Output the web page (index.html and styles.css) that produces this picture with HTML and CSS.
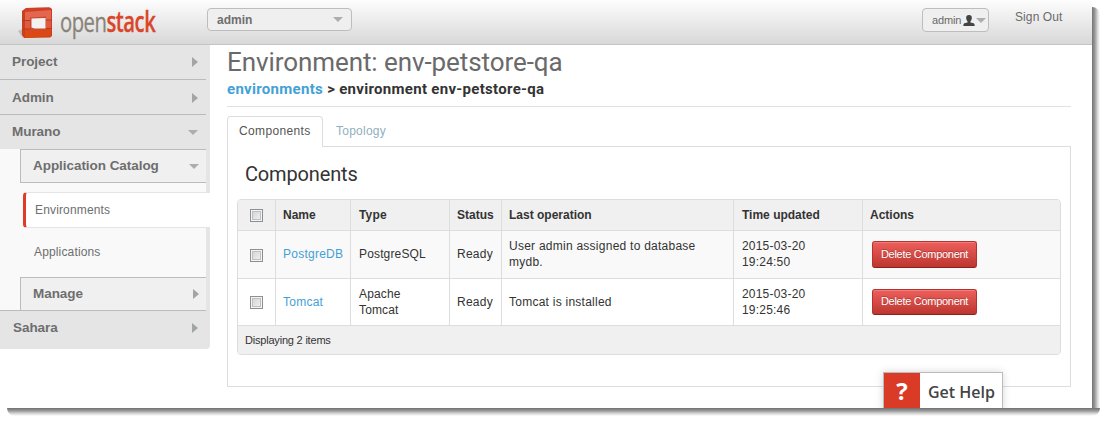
FILE: index.html
```html
<!DOCTYPE html>
<html lang="en">
<head>
<meta charset="utf-8">
<title>Environment: env-petstore-qa</title>
<link rel="stylesheet" href="styles.css">
</head>
<body>
<div class="window">
  <header class="topbar">
    <svg class="mark" width="35" height="32" viewBox="0 0 35 32">
      <path d="M0 24 5 22v9z" fill="#c3bab6"/>
      <path d="M4 4 8 1 32 .5 34 2v27l-2 1.500L6 31l-2-3z" fill="#c9401f"/>
      <path d="M5 4 8.500 1 31 .500 33 3 7 6z" fill="#cf3f29"/>
      <path d="M7 5 33 3v10H7z" fill="#e5664e"/>
      <path d="M7 13h26v9H7z" fill="#e05a3f"/>
      <path d="M7 22h26v7L7 31z" fill="#dc4716"/>
      <path d="M12 10.500 28 9.500V23l-16 .5z" fill="#c94a30"/>
      <path d="M13.500 11.500 27.500 11v10.500h-11l-3-1z" fill="#f4f2f1"/>
      <path d="M4 13.500h8M5 22h7M28 13h6M28 21.500h6" stroke="#b03a25" fill="none"/>
    </svg>
    <div class="brand"><span>open</span><b>stack</b></div>
    <div class="picker">admin<i class="caret down"></i></div>
    <div class="user">admin
      <svg width="12" height="11" viewBox="0 0 12 11"><path d="M6 0C3.600 0 3 1.400 3.200 3.200c.1 1.500.6 2.300 1.300 2.900v1.300L1.300 8.200Q.3 8.700.3 11h11.400q0-2.300-1-2.800L7.500 7.400V6.100c.7-.6 1.200-1.400 1.300-2.900C9 1.400 8.400 0 6 0z" fill="#444"/></svg>
      <i class="caret down"></i>
    </div>
    <a class="signout">Sign Out</a>
  </header>
  <div class="body">
    <nav class="side">
      <div class="item project">Project<i class="caret right"></i></div>
      <div class="item admin">Admin<i class="caret right"></i></div>
      <div class="item murano">Murano<i class="caret down"></i></div>
      <div class="sub">
        <div class="group catalog">Application Catalog<i class="caret down"></i></div>
        <div class="leaf active">Environments</div>
        <div class="leaf">Applications</div>
        <div class="group manage">Manage<i class="caret right"></i></div>
      </div>
      <div class="item sahara">Sahara<i class="caret right"></i></div>
    </nav>
    <main class="main">
      <h1><span>Environment: env-petstore-qa</span></h1>
      <div class="crumbs"><a>environments</a> &gt; environment env-petstore-qa</div>
      <div class="tabs"><div class="tab on">Components</div><div class="tab">Topology</div></div>
      <section class="panel">
        <h2>Components</h2>
        <table class="grid">
          <colgroup><col class="c1"><col class="c2"><col class="c3"><col class="c4"><col class="c5"><col class="c6"><col class="c7"></colgroup>
          <tr class="head"><th><i class="check"></i></th><th>Name</th><th>Type</th><th>Status</th><th>Last operation</th><th>Time updated</th><th>Actions</th></tr>
          <tr class="odd"><td><i class="check"></i></td><td><a>PostgreDB</a></td><td>PostgreSQL</td><td>Ready</td><td>User admin assigned to database<br>mydb.</td><td>2015-03-20<br>19:24:50</td><td><span class="btn">Delete Component</span></td></tr>
          <tr class="even"><td><i class="check"></i></td><td><a>Tomcat</a></td><td>Apache<br>Tomcat</td><td>Ready</td><td>Tomcat is installed</td><td>2015-03-20<br>19:25:46</td><td><span class="btn short">Delete Component</span></td></tr>
          <tr class="foot"><td colspan="7">Displaying 2 items</td></tr>
        </table>
      </section>
    </main>
  </div>
  <div class="help"><span class="q">?</span><span class="label">Get Help</span></div>
</div>
<div class="shade-right"></div>
<div class="shade-bottom"></div>
</body>
</html>
```
FILE: styles.css
```css
* { box-sizing: border-box; }
body {
  margin: 0;
  width: 1107px;
  height: 423px;
  overflow: hidden;
  background: #fff;
  display: grid;
  grid-template: 408px 15px / 1092px 15px;
  font: 12px/16px "Liberation Sans", Arial, sans-serif;
  color: #333;
}
a { color: #43a1d6; }
.window { position: relative; overflow: hidden; }
.shade-right {
  width: 8px;
  height: 401px;
  margin-top: 7px;
  border-radius: 0 8px 0 0;
  background: linear-gradient(90deg, #737373, #9a9a9a 35%, #d8d8d8 70%, #fff);
}
.shade-bottom {
  grid-column: 1 / 3;
  height: 8px;
  margin: 0 7px 0 7px;
  border-radius: 0 0 8px 8px;
  background: linear-gradient(#6d716f, #999 35%, #d8d8d8 70%, #fff);
}

.topbar {
  height: 45px;
  display: flex;
  align-items: flex-start;
  background: linear-gradient(#fdfdfd, #d8d8d8);
  border-bottom: 1px solid #c4c4c4;
}
.mark { margin: 7px 0 0 18px; flex: none; }
.brand {
  width: 147px;
  height: 38px;
  margin: 1px 0 0 7px;
  font: 28px/40px "Open Sans", sans-serif;
  letter-spacing: -.7px;
  color: #8a8379;
  -webkit-text-stroke: .3px;
  white-space: nowrap;
  transform: scaleX(.725);
  transform-origin: 0 0;
}
.brand b { font-weight: 600; color: #db4628; }
.picker {
  width: 145px;
  height: 23px;
  margin: 8px 0 0 0;
  padding: 0 8px 0 9px;
  display: flex;
  align-items: center;
  justify-content: space-between;
  border: 1px solid #bdbdbd;
  border-radius: 4px;
  background: #efefef;
  font-weight: bold;
  color: #6e6e6e;
}
.user {
  width: 67px;
  height: 24px;
  margin: 8px 0 0 570px;
  padding-left: 9px;
  display: flex;
  align-items: center;
  border: 1px solid #bdbdbd;
  border-radius: 4px;
  background: #efefef;
  color: #6a6a6a;
  white-space: nowrap;
  font-size: 11px;
  letter-spacing: -.15px;
}
.user svg { margin-left: 2px; flex: none; }
.user .caret { margin-left: 1px; }
.signout { margin: 9px 0 0 26px; color: #6a6a6a; letter-spacing: .1px; }
.caret { width: 0; height: 0; flex: none; }
.down { border: 5px solid transparent; border-top: 5px solid #aaaeb0; border-bottom: 0; }
.right { border: 5px solid transparent; border-left: 6px solid #a2a5a7; border-right: 0; }

.body { display: flex; align-items: flex-start; }
.side {
  width: 210px;
  height: 304px;
  background: #e5e5e5;
  border-radius: 0 0 4px 0;
  font-weight: bold;
  font-size: 13.5px;
  letter-spacing: -.05px;
  color: #6e6e6e;
}
.item {
  width: 206px;
  height: 35px;
  padding: 0 8px 0 12px;
  display: flex;
  align-items: center;
  justify-content: space-between;
  border-bottom: 1px solid #b9bcbd;
}
.admin { padding-top: 1px; }
.murano { height: 34px; border: 0; }
.sahara { height: 34px; border: 0; padding-left: 13px; }
.sub { width: 206px; height: 162px; background: #f9f9f9; border-bottom: 1px solid #b9bcbd; }
.group {
  width: 186px;
  height: 34px;
  margin-left: 20px;
  padding: 0 7px 0 12px;
  display: flex;
  align-items: center;
  justify-content: space-between;
  border: 1px solid #b9bcbd;
  border-right: 0;
  background: #f0f0f0;
}
.manage { height: 33px; border-bottom: 0; }
.leaf {
  height: 49px;
  padding-left: 34px;
  line-height: 49px;
  font-weight: normal;
  font-size: 12px;
  letter-spacing: .15px;
}
.active {
  width: 187px;
  height: 36px;
  line-height: 34px;
  margin: 9px 0 0 23px;
  padding-left: 9px;
  background: #fff;
  border: 1px solid #e5e5e5;
  border-left: 3px solid #dc3c28;
  border-right: 0;
  border-radius: 4px 0 0 4px;
}

.main { width: 844px; margin-left: 17px; }
h1 {
  height: 33px;
  margin: 0;
  font: 26px/34px Roboto, sans-serif;
  letter-spacing: -.08px;
  color: #6a6a6a;
  white-space: nowrap;
}
.crumbs {
  height: 29px;
  border-bottom: 1px solid #e2e2e2;
  font: bold 15px/22px Roboto, sans-serif;
  letter-spacing: .3px;
  white-space: nowrap;
}
.tabs { display: flex; height: 39px; padding-top: 9px; }
.tab {
  height: 30px;
  padding: 0 13px;
  line-height: 30px;
  letter-spacing: .25px;
  color: #8fb0c0;
}
.tab.on {
  position: relative;
  width: 96px;
  height: 31px;
  padding-left: 11px;
  background: #fff;
  border: 1px solid #ddd;
  border-bottom: 0;
  border-radius: 4px 4px 0 0;
  line-height: 28px;
  letter-spacing: .35px;
  color: #555;
}
.panel { height: 241px; padding: 0 9px; border: 1px solid #ddd; }
h2 {
  height: 52px;
  margin: 0;
  padding-left: 8px;
  font: 20px/54px Roboto, sans-serif;
  letter-spacing: -.15px;
}
.grid {
  width: 824px;
  table-layout: fixed;
  border: 1px solid #ddd;
  border-spacing: 0;
  border-collapse: separate;
  border-radius: 4px;
  overflow: hidden;
}
.c1 { width: 37px; }
.c2 { width: 75px; }
.c3 { width: 99px; }
.c4 { width: 52px; }
.c5 { width: 232px; }
.c6 { width: 129px; }
.c7 { width: 198px; }
th, td { padding: 0 0 0 7px; text-align: left; white-space: nowrap; vertical-align: middle; }
th + th, td + td { border-left: 1px solid #ddd; }
.head { height: 30px; background: #f0f0f0; }
.odd { height: 48px; background: #f9f9f9; }
.even { height: 47px; }
.foot { height: 29px; background: #f0f0f0; font-size: 11px; }
td { border-top: 1px solid #ddd; letter-spacing: .25px; }
.odd td { padding-bottom: 2px; }
.odd td:last-child { padding-bottom: 0; }
.foot td { letter-spacing: -.2px; }
th:first-child, .odd td:first-child, .even td:first-child { padding-left: 12px; }
.odd td:first-child { padding-top: 2px; padding-bottom: 0; }
td:nth-child(7) { padding-left: 9px; }
th:nth-child(3), td:nth-child(3) { padding-left: 8px; letter-spacing: .15px; }
th:nth-child(6), td:nth-child(6) { padding-left: 8px; letter-spacing: .2px; }
th:nth-child(6) { letter-spacing: 0; }
.check {
  display: block;
  width: 13px;
  height: 13px;
  border: 1px solid #8e8f8f;
  background: linear-gradient(135deg, #cbcfd5, #f6f6f6);
  box-shadow: inset 0 0 0 1px #f4f4f4, inset 0 0 0 2px #bcc0c5;
}
.btn {
  display: block;
  width: 105px;
  height: 27px;
  border: 1px solid #b4332e;
  border-bottom-color: #8b211d;
  border-radius: 3px;
  background: linear-gradient(#ee5f5b, #bd362f);
  box-shadow: inset 0 1px 0 rgba(255,255,255,.2);
  color: #fff;
  font-size: 11px;
  line-height: 25px;
  text-align: center;
  letter-spacing: -.28px;
  text-shadow: 0 -1px 0 rgba(0,0,0,.25);
}
.short { height: 26px; line-height: 23px; }

.help {
  position: absolute;
  left: 883px;
  top: 372px;
  width: 120px;
  height: 40px;
  display: flex;
  border: 1px solid #bbb;
  background: #fff;
  box-shadow: 0 0 8px rgba(0,0,0,.16);
  font: 600 16px/39px "Open Sans", sans-serif;
  color: #444;
}
.q { width: 36px; background: #da3b27; color: #fff; font-weight: 700; font-size: 24px; line-height: 36px; text-align: center; }
.label { padding-left: 8px; white-space: nowrap; }
```
